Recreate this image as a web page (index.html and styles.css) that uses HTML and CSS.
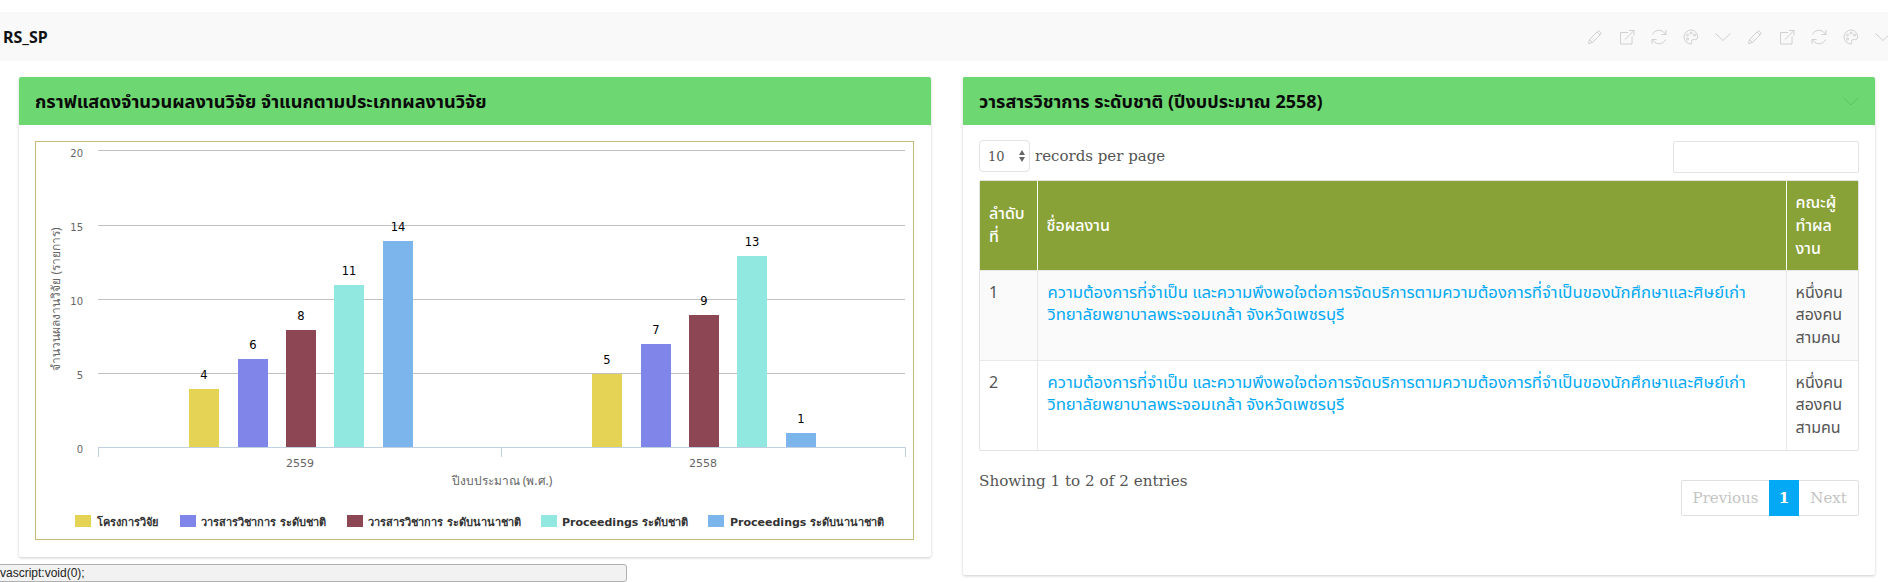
FILE: index.html
```html
<!DOCTYPE html>
<html lang="th">
<head>
<meta charset="utf-8">
<title>RS_SP</title>
<link rel="stylesheet" href="styles.css">
</head>
<body>
<header class="topbar">
  <span class="brand">RS_SP</span>
  <div class="tools">
    <svg class="ic" viewBox="0 0 16 16"><path d="M1.500 14.500l1-4L11.500 1.500l3 3-9 9zM2.500 10.500l3 3M10 3l3 3"/></svg>
    <svg class="ic" viewBox="0 0 16 16"><path d="M9 3.500H1.500V15H13V7.500M6 10.500L15 1.500M10 1.500h5v5"/></svg>
    <svg class="ic" viewBox="0 0 16 16"><path d="M1.500 5.500A7 7 0 0 1 13.500 4l1.500 1.500M14.500 10.500A7 7 0 0 1 2.500 12L1 10.500M15 1v4.500h-4.500M1 15v-4.500h4.500"/></svg>
    <svg class="ic" viewBox="0 0 16 16"><path d="M8 1a7 7 0 1 0 0 14c2 0-.5-2.500 1-4s3 .5 5-1C15.500 8 14 1 8 1z"/><circle cx="4.500" cy="6" r="1"/><circle cx="8" cy="4" r="1"/><circle cx="11.500" cy="6" r="1"/><circle cx="4.500" cy="10" r="1"/></svg>
    <svg class="ic" viewBox="0 0 16 16"><path d="M.5 4.500L8 11.500l7.500-7"/></svg>
    <svg class="ic" viewBox="0 0 16 16"><path d="M1.500 14.500l1-4L11.500 1.500l3 3-9 9zM2.500 10.500l3 3M10 3l3 3"/></svg>
    <svg class="ic" viewBox="0 0 16 16"><path d="M9 3.500H1.500V15H13V7.500M6 10.500L15 1.500M10 1.500h5v5"/></svg>
    <svg class="ic" viewBox="0 0 16 16"><path d="M1.500 5.500A7 7 0 0 1 13.500 4l1.500 1.500M14.500 10.500A7 7 0 0 1 2.500 12L1 10.500M15 1v4.500h-4.500M1 15v-4.500h4.500"/></svg>
    <svg class="ic" viewBox="0 0 16 16"><path d="M8 1a7 7 0 1 0 0 14c2 0-.5-2.500 1-4s3 .5 5-1C15.500 8 14 1 8 1z"/><circle cx="4.500" cy="6" r="1"/><circle cx="8" cy="4" r="1"/><circle cx="11.500" cy="6" r="1"/><circle cx="4.500" cy="10" r="1"/></svg>
    <svg class="ic" viewBox="0 0 16 16"><path d="M.5 4.500L8 11.500l7.500-7"/></svg>
  </div>
</header>

<main class="row">
  <section class="card card-left">
    <h2 class="card-head title-wide">กราฟแสดงจำนวนผลงานวิจัย จำแนกตามประเภทผลงานวิจัย</h2>
    <div class="chart-wrap">
      <div class="chart-frame">
      <svg class="chart" viewBox="0 0 877 397" width="877" height="397">
        <g class="grid">
          <path d="M62 8.500H869M62 83.500H869M62 157.500H869M62 231.500H869"/>
        </g>
        <g class="ylab">
          <text x="47" y="14.500">20</text><text x="47" y="88.500">15</text><text x="47" y="162.500">10</text><text x="47" y="236.500">5</text><text x="47" y="310.500">0</text>
        </g>
        <text class="ytitle" transform="translate(24 157) rotate(-90)">จำนวนผลงานวิจัย (รายการ)</text>
        <g class="s1"><rect x="153" y="247" width="30" height="58"/><rect x="556" y="232" width="30" height="73"/></g>
        <g class="s2"><rect x="202" y="217" width="30" height="88"/><rect x="605" y="202" width="30" height="103"/></g>
        <g class="s3"><rect x="250" y="188" width="30" height="117"/><rect x="653" y="173" width="30" height="132"/></g>
        <g class="s4"><rect x="298" y="143" width="30" height="162"/><rect x="701" y="114" width="30" height="191"/></g>
        <g class="s5"><rect x="347" y="99" width="30" height="206"/><rect x="750" y="291" width="30" height="14"/></g>
        <g class="axis">
          <path d="M62 305.500H870M62.500 305V315M465.500 305V315M869.500 305V315"/>
        </g>
        <g class="val">
          <text x="168" y="237">4</text><text x="217" y="207">6</text><text x="265" y="178">8</text><text x="313" y="133">11</text><text x="362" y="89">14</text>
          <text x="571" y="222">5</text><text x="620" y="192">7</text><text x="668" y="163">9</text><text x="716" y="104">13</text><text x="765" y="281">1</text>
        </g>
        <g class="xlab"><text x="264" y="325">2559</text><text x="667" y="325">2558</text></g>
        <text class="xtitle" x="466" y="343" text-anchor="middle">ปีงบประมาณ (พ.ศ.)</text>
        <g class="leg">
          <rect class="s1" x="39" y="373" width="16" height="12"/><text x="61" y="384">โครงการวิจัย</text>
          <rect class="s2" x="144" y="373" width="16" height="12"/><text x="165" y="384">วารสารวิชาการ ระดับชาติ</text>
          <rect class="s3" x="311" y="373" width="16" height="12"/><text x="332" y="384">วารสารวิชาการ ระดับนานาชาติ</text>
          <rect class="s4" x="505" y="373" width="16" height="12"/><text x="526" y="384">Proceedings ระดับชาติ</text>
          <rect class="s5" x="672" y="373" width="16" height="12"/><text x="694" y="384">Proceedings ระดับนานาชาติ</text>
        </g>
      </svg>
      </div>
    </div>
  </section>

  <section class="card card-right">
    <div class="head-flex">
      <h2 class="card-head">วารสารวิชาการ ระดับชาติ (ปีงบประมาณ 2558)</h2>
      <svg class="head-chev" viewBox="0 0 16 9"><path d="M.5 .5L8 8l7.500-7.500"/></svg>
    </div>
    <div class="card-body">
      <div class="controls">
        <label class="len"><span class="sel">10<span class="arrows"><i class="up"></i><i class="down"></i></span></span> records per page</label>
        <span class="search"></span>
      </div>
      <div class="table-box">
        <table>
          <colgroup><col class="c1"><col class="c2"><col class="c3"></colgroup>
          <thead><tr><th>ลำดับที่</th><th>ชื่อผลงาน</th><th>คณะผู้ทำผลงาน</th></tr></thead>
          <tbody>
            <tr class="odd"><td>1</td><td><a href="#">ความต้องการที่จำเป็น และความพึงพอใจต่อการจัดบริการตามความต้องการที่จำเป็นของนักศึกษาและศิษย์เก่า วิทยาลัยพยาบาลพระจอมเกล้า จังหวัดเพชรบุรี</a></td><td>หนึ่งคน<br>สองคน<br>สามคน</td></tr>
            <tr><td>2</td><td><a href="#">ความต้องการที่จำเป็น และความพึงพอใจต่อการจัดบริการตามความต้องการที่จำเป็นของนักศึกษาและศิษย์เก่า วิทยาลัยพยาบาลพระจอมเกล้า จังหวัดเพชรบุรี</a></td><td>หนึ่งคน<br>สองคน<br>สามคน</td></tr>
          </tbody>
        </table>
      </div>
      <div class="foot">
        <span class="info">Showing 1 to 2 of 2 entries</span>
        <nav class="pager"><span class="pg pg-prev">Previous</span><span class="pg on">1</span><span class="pg pg-next">Next</span></nav>
      </div>
    </div>
  </section>
</main>
<div class="status">vascript:void(0);</div>
</body>
</html>
```
FILE: styles.css
```css
* { box-sizing: border-box; }
html, body { margin: 0; height: 582px; overflow: hidden; background: #fff; }
body { font-family: "Noto Sans", "Noto Sans Thai", sans-serif; color: #555; position: relative; }
.topbar { margin-top: 12px; height: 49px; background: #f9f9f9; display: flex; align-items: center; justify-content: space-between; padding-left: 3px; overflow: hidden; }
.brand { font-size: 16px; font-weight: 700; color: #111; }
.tools { display: flex; gap: 16px; margin-right: -3px; margin-top: 1px; }
.ic { width: 16px; height: 16px; fill: none; stroke: #d0d0d0; stroke-width: 1; flex: none; }
.row { display: flex; gap: 32px; padding: 16px 13px 0 19px; align-items: flex-start; }
.card { width: 912px; background: #fff; box-shadow: 0 1px 3px rgba(0,0,0,.2); border-radius: 2px; }
.card-left { height: 480px; }
.card-right { height: 498px; }
.card-head { margin: 0; height: 48px; background: #6dd871; color: #0a0a0a; font-size: 18px; font-weight: 700; line-height: 48px; padding-left: 16px; border-radius: 2px 2px 0 0; }
.title-wide { font-size: 18.200px; }
.head-flex { display: flex; align-items: center; justify-content: space-between; background: #6dd871; border-radius: 2px 2px 0 0; padding-right: 16px; }
.head-chev { width: 16px; height: 9px; fill: none; stroke: #5cc262; stroke-width: 1; }
.chart-wrap { padding: 16px; }
.chart-frame { width: 879px; height: 399px; border: 1px solid #c8bb7a; }
.chart { display: block; }
.grid path { stroke: #c0c0c0; fill: none; }
.axis path { stroke: #c0d0e0; fill: none; }
.ylab text { font: 10px "DejaVu Sans", sans-serif; fill: #666; text-anchor: end; }
.ytitle, .xtitle { font: 12px "Noto Sans", "DejaVu Sans", sans-serif; fill: #666; }
.ytitle { text-anchor: middle; }
.val text { font: 11.500px "DejaVu Sans", sans-serif; fill: #000; text-anchor: middle; }
.xlab text { font: 11px "DejaVu Sans", sans-serif; fill: #666; text-anchor: middle; }
.leg text { font: 700 11px "DejaVu Sans", sans-serif; fill: #333; }
.s1 { fill: #e4d354; } .s2 { fill: #8085e9; } .s3 { fill: #8d4654; } .s4 { fill: #91e8e1; } .s5 { fill: #7cb5ec; }
.card-body { padding: 16px; }
.controls { display: flex; justify-content: space-between; height: 39px; }
.len { font: 15px "DejaVu Serif", serif; color: #555; display: flex; align-items: center; gap: 5px; height: 30px; }
.sel { width: 51px; height: 32px; flex: none; border: 1px solid #e3e3e3; border-radius: 4px; display: flex; align-items: center; justify-content: space-between; padding: 0 4px 0 8px; font-size: 13px; }
.arrows { display: flex; flex-direction: column; gap: 2px; }
.arrows i { display: block; border-left: 3px solid transparent; border-right: 3px solid transparent; }
.arrows .up { border-bottom: 5px solid #666; }
.arrows .down { border-top: 5px solid #666; }
.search { width: 186px; height: 32px; border: 1px solid #e3e3e3; border-radius: 2px; }
.table-box { border: 1px solid #e3e3e3; border-radius: 2px; }
table { width: 100%; border-collapse: collapse; table-layout: fixed; font-size: 16px; line-height: 22.860px; }
.c1 { width: 57px; } .c3 { width: 72px; }
th { height: 89px; background: #88a237; color: #fff; font-weight: 500; text-align: left; padding: 10px 9px; border-left: 1px solid #fff; vertical-align: middle; }
th:first-child { border-left: 0; }
td { height: 90px; padding: 10px 9px; vertical-align: top; border-left: 1px solid #e8e8e8; border-top: 1px solid #e8e8e8; color: #555; }
td:first-child { border-left: 0; }
td:nth-child(2) { padding-left: 10px; }
.odd td { background: #fafafa; }
td a { color: #03a9f4; text-decoration: none; font-size: 16.700px; }
.foot { display: flex; justify-content: space-between; margin-top: 14px; }
.info { font: 15.200px "DejaVu Serif", serif; color: #555; margin-top: 7px; }
.pager { display: flex; height: 36px; margin-top: 15px; border: 1px solid #e0e0e0; border-radius: 2px; font: 15px "DejaVu Serif", serif; color: #c4c4c4; }
.pg { display: flex; align-items: center; justify-content: center; }
.pg-prev { width: 87px; }
.pg-next { width: 59px; }
.pg.on { width: 30px; background: #03a9f4; color: #fff; margin: -1px 0; font-weight: 700; }
.status { position: absolute; left: -1px; top: 564px; width: 628px; height: 18px; background: #f2f2f2; border: 1px solid #b0b0b0; border-radius: 0 3px 3px 0; font: 12px/16px "Liberation Sans", sans-serif; color: #222; }
```
